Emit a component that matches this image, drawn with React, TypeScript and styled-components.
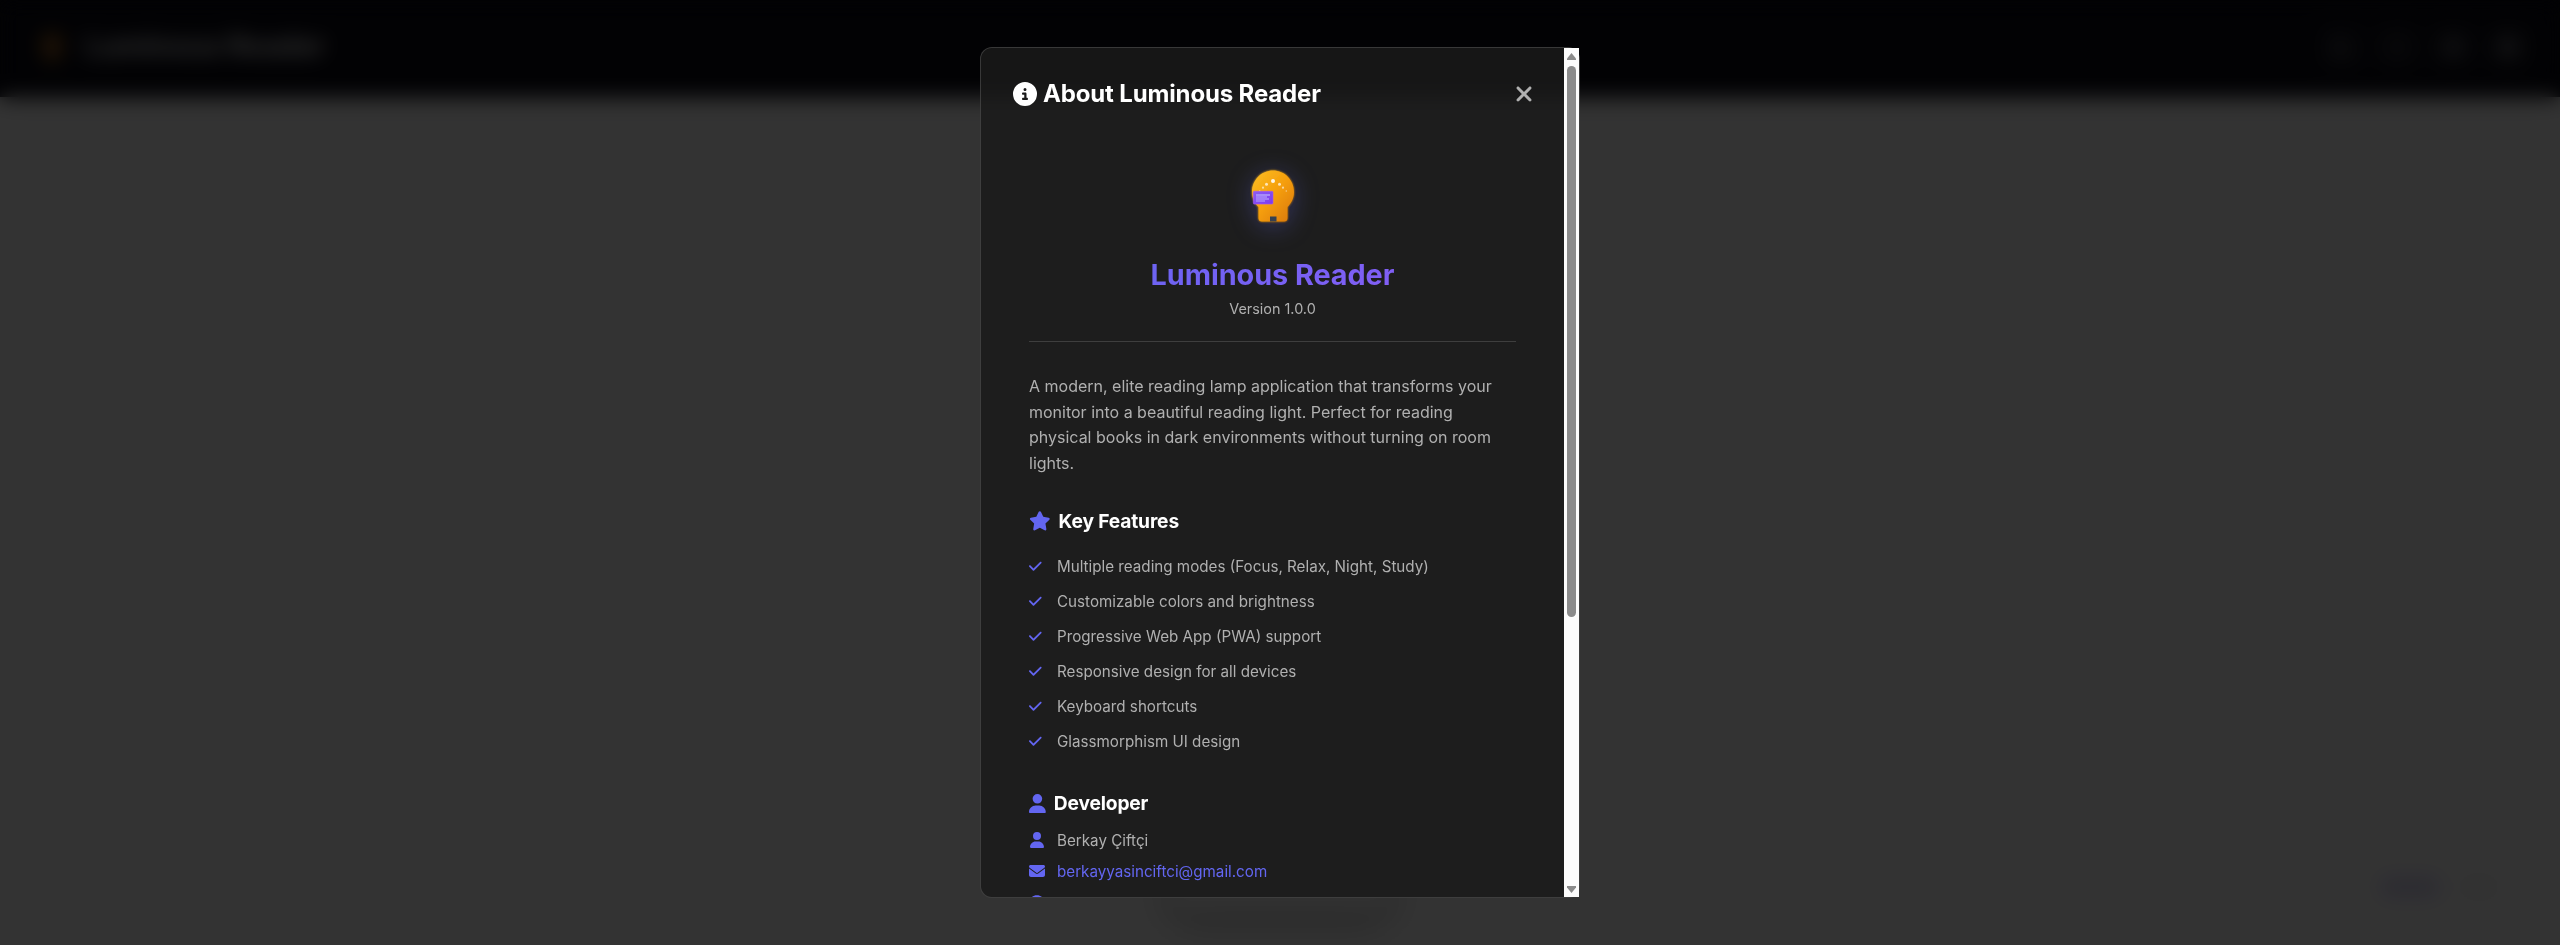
import React from "react";
import styled, { createGlobalStyle } from "styled-components";
import {
  FaCircleInfo,
  FaXmark,
  FaStar,
  FaCheck,
  FaUser,
  FaEnvelope,
  FaGithub,
  FaGear,
  FaExpand,
  FaMoon,
} from "react-icons/fa6";

const GlobalStyle = createGlobalStyle`
  * { box-sizing: border-box; margin: 0; padding: 0; }
  body {
    background: #fff;
    font-family: Inter, "Liberation Sans", sans-serif;
    line-height: 1.6;
    overflow: hidden;
  }
`;

const Page = styled.div`
  height: 100vh;
  display: flex;
  flex-direction: column;
  justify-content: space-between;
  background: #ffffff;
`;

const TopBar = styled.header`
  height: 97px;
  padding: 0 28px 4px 32px;
  display: flex;
  align-items: center;
  justify-content: space-between;
  background: #0a0a14;
  box-shadow: 0 4px 20px rgba(0, 0, 0, 0.15);
  color: #e0e0e0;
`;

const Brand = styled.div`
  display: flex;
  align-items: center;
  gap: 13px;
  font-size: 28.8px;
  font-weight: 700;
  letter-spacing: -0.3px;
  white-space: nowrap;
`;

const TopActions = styled.div`
  display: flex;
  gap: 8px;
`;

const TopButton = styled.div`
  width: 47.5px;
  height: 48px;
  border-radius: 12px;
  display: flex;
  align-items: center;
  justify-content: center;
  color: #8a8a90;
  background: rgba(255, 255, 255, 0.05);
  font-size: 18px;
`;

const BottomBar = styled.footer`
  display: grid;
  grid-template-columns: 1fr 224px 1fr;
  align-items: center;
  padding: 0 24px 33px;
`;

const Dock = styled.div`
  grid-column: 2;
  height: 50px;
  border-radius: 25px;
  background: #f6f6f6;
  box-shadow: 0 8px 32px rgba(0, 0, 0, 0.3);
`;

const Badges = styled.div`
  display: flex;
  justify-content: flex-end;
  gap: 20px;
  padding-right: 38px;
`;

const Badge = styled.div<{ $color: string; $width: number }>`
  width: ${(p) => p.$width}px;
  height: 22px;
  border-radius: 8px;
  background: ${(p) => p.$color};
`;

const Overlay = styled.div`
  position: fixed;
  inset: 0;
  display: flex;
  align-items: center;
  justify-content: center;
  background: rgba(0, 0, 0, 0.8);
  backdrop-filter: blur(10px);
`;

const Modal = styled.div`
  width: 600px;
  height: 90vh;
  display: flex;
  border: 1px solid rgba(255, 255, 255, 0.15);
  border-radius: 12px;
  background: rgba(26, 26, 26, 0.85);
`;

const ScrollArea = styled.div`
  flex: 1;
  min-width: 0;
  overflow: hidden;
  padding: 30px 32px 0;
  border-radius: 11px 0 0 11px;
`;

const Header = styled.div`
  display: flex;
  align-items: center;
  justify-content: space-between;
  height: 32px;
`;

const Title = styled.h2`
  display: flex;
  align-items: center;
  gap: 6px;
  font-size: 24px;
  font-weight: 700;
  line-height: 32px;
  letter-spacing: -0.15px;
  color: #fff;
  white-space: nowrap;
`;

const Close = styled.button`
  width: 40px;
  height: 40px;
  margin-right: -12px;
  display: flex;
  align-items: center;
  justify-content: center;
  border: 0;
  background: none;
  color: #b0b0b0;
  font-size: 24px;
`;

const Body = styled.div`
  padding: 46px 16px 0;
`;

const Hero = styled.div`
  display: flex;
  flex-direction: column;
  align-items: center;
  height: 186px;
  border-bottom: 1px solid rgba(255, 255, 255, 0.15);
`;

const Logo = styled.svg`
  width: 80px;
  height: 80px;
  overflow: visible;
  filter: drop-shadow(0 4px 12px rgba(99, 102, 241, 0.3));
`;

const AppName = styled.h3`
  width: 100%;
  margin-top: 16px;
  font-size: 28.8px;
  line-height: 46px;
  font-weight: 700;
  letter-spacing: -0.05px;
  text-align: center;
  background: linear-gradient(135deg, #6366f1, #8b5cf6);
  background-clip: text;
  -webkit-background-clip: text;
  color: transparent;
`;

const Version = styled.p`
  margin-top: -1px;
  font-size: 14.4px;
  line-height: 23px;
  color: #b0b0b0;
`;

const Description = styled.p`
  margin-top: 32px;
  font-size: 16px;
  line-height: 25.6px;
  color: #b0b0b0;
`;

const SectionTitle = styled.h4`
  display: flex;
  align-items: center;
  gap: 8px;
  font-size: 19.2px;
  line-height: 31px;
  font-weight: 700;
  letter-spacing: -0.15px;
  color: #fff;
`;

const TitleIcon = styled.span<{ $width: number }>`
  display: flex;
  width: ${(p) => p.$width}em;
  color: #6366f1;

  svg {
    width: 100%;
    height: ${(p) => Math.max(1, p.$width)}em;
  }
`;

const Section = styled.section<{ $gap: number }>`
  margin-top: ${(p) => p.$gap}px;
`;

const FeatureList = styled.ul`
  list-style: none;
  margin-top: 13px;
`;

const Feature = styled.li`
  display: flex;
  align-items: center;
  height: 35px;
  font-size: 15.2px;
  color: #b0b0b0;

  svg {
    width: 12.6px;
    height: 14.4px;
    margin: 0 15.4px 2px 0;
    color: #6366f1;
  }
`;

const Contacts = styled.div`
  margin-top: 7px;
`;

const Contact = styled.div<{ $link?: boolean }>`
  display: flex;
  align-items: center;
  height: 31px;
  gap: 12px;
  font-size: 15.2px;
  white-space: nowrap;
  color: ${(p) => (p.$link ? "#6366f1" : "#b0b0b0")};

  svg {
    width: 16px;
    height: 16px;
    margin-bottom: 2px;
    color: #6366f1;
  }

  &:last-child {
    height: 33px;
  }
`;

const ScrollTrack = styled.div`
  width: 15px;
  display: flex;
  flex-direction: column;
  align-items: center;
  background: #fcfcfc;
`;

const Arrow = styled.svg`
  width: 9px;
  height: 7px;
  margin: 5px 0 4px;
  flex: none;
`;

const Thumb = styled.div`
  width: 9px;
  height: 551px;
  border-radius: 5px;
  background: #8b8b8b;
  margin: 2px 0 auto;
`;

const features = [
  "Multiple reading modes (Focus, Relax, Night, Study)",
  "Customizable colors and brightness",
  "Progressive Web App (PWA) support",
  "Responsive design for all devices",
  "Keyboard shortcuts",
  "Glassmorphism UI design",
];

function LampLogo() {
  return (
    <Logo viewBox="0 0 80 80">
      <defs>
        <linearGradient id="bulb" x1="0" y1="0" x2="1" y2="1">
          <stop offset="0" stopColor="#fbbf24" />
          <stop offset="0.5" stopColor="#f59e0b" />
          <stop offset="1" stopColor="#d97706" />
        </linearGradient>
        <linearGradient id="book" x1="0" y1="0" x2="1" y2="1">
          <stop offset="0" stopColor="#8b5cf6" />
          <stop offset="1" stopColor="#7c3aed" />
        </linearGradient>
        <filter id="glow" x="-30%" y="-30%" width="160%" height="160%">
          <feGaussianBlur stdDeviation="1.2" result="b" />
          <feMerge>
            <feMergeNode in="b" />
            <feMergeNode in="SourceGraphic" />
          </feMerge>
        </filter>
      </defs>
      <path
        filter="url(#glow)"
        fill="url(#bulb)"
        d="M40 14.5C28.4 14.5 19 23.9 19 36C19 42 21.5 47 25.5 51V62Q25.5 65.5 29 65.5H51Q54.5 65.5 54.5 62V51C58.5 47 61 42 61 36C61 23.9 51.6 14.5 40 14.5Z"
      />
      <g fill="#fff">
        <circle cx="40" cy="25" r="2" opacity="0.9" />
        <circle cx="33.5" cy="28.2" r="1.5" opacity="0.7" />
        <circle cx="46.5" cy="28.2" r="1.5" opacity="0.7" />
        <circle cx="30" cy="31.7" r="1.1" opacity="0.6" />
        <circle cx="50" cy="31.7" r="1.1" opacity="0.6" />
        <circle cx="26.7" cy="35" r="0.8" opacity="0.5" />
        <circle cx="53.3" cy="35" r="0.8" opacity="0.5" />
      </g>
      <rect x="20.3" y="35.3" width="19.7" height="12.8" rx="1" fill="url(#book)" stroke="#a855f7" strokeWidth="0.6" />
      <g fill="#a78bfa">
        <rect x="23" y="38" width="14" height="2" />
        <rect x="23" y="40" width="11" height="2" opacity="0.8" />
        <rect x="23" y="42" width="13" height="2" opacity="0.8" />
        <rect x="23" y="44" width="9" height="2" opacity="0.7" />
      </g>
      <rect x="37" y="60.5" width="6.5" height="5" fill="#374151" />
    </Logo>
  );
}

export default function App() {
  return (
    <>
      <GlobalStyle />
      <Page>
        <TopBar>
          <Brand>
            <svg width="40" height="40" viewBox="0 0 40 40">
              <path d="M20 6a11 11 0 0 0-7 19v9h14v-9A11 11 0 0 0 20 6Z" fill="#b06c20" />
            </svg>
            Luminous Reader
          </Brand>
          <TopActions>
            <TopButton><FaMoon /></TopButton>
            <TopButton><FaExpand /></TopButton>
            <TopButton><FaGear /></TopButton>
            <TopButton><FaCircleInfo /></TopButton>
          </TopActions>
        </TopBar>
        <BottomBar>
          <Dock />
          <Badges>
            <Badge $color="#dcd8f8" $width={60} />
            <Badge $color="#f5f5f5" $width={38} />
          </Badges>
        </BottomBar>
      </Page>
      <Overlay>
        <Modal>
          <ScrollArea>
            <Header>
              <Title>
                <FaCircleInfo />
                About Luminous Reader
              </Title>
              <Close aria-label="Close"><FaXmark /></Close>
            </Header>
            <Body>
              <Hero>
                <LampLogo />
                <AppName>Luminous Reader</AppName>
                <Version>Version 1.0.0</Version>
              </Hero>
              <Description>
                A modern, elite reading lamp application that transforms your monitor into a
                beautiful reading light. Perfect for reading physical books in dark environments
                without turning on room lights.
              </Description>
              <Section $gap={29}>
                <SectionTitle>
                  <TitleIcon $width={1.125}><FaStar /></TitleIcon>
                  Key Features
                </SectionTitle>
                <FeatureList>
                  {features.map((f) => (
                    <Feature key={f}><FaCheck />{f}</Feature>
                  ))}
                </FeatureList>
              </Section>
              <Section $gap={28}>
                <SectionTitle>
                  <TitleIcon $width={0.875}><FaUser /></TitleIcon>
                  Developer
                </SectionTitle>
                <Contacts>
                  <Contact><FaUser />Berkay Çiftçi</Contact>
                  <Contact $link><FaEnvelope />berkayyasinciftci@gmail.com</Contact>
                  <Contact $link><FaGithub />github.com/berkay</Contact>
                </Contacts>
              </Section>
            </Body>
          </ScrollArea>
          <ScrollTrack>
            <Arrow viewBox="0 0 9 7"><path d="M4.5 0L9 5.5V7H0V5.5Z" fill="#8b8b8b" /></Arrow>
            <Thumb />
            <Arrow viewBox="0 0 9 7"><path d="M4.5 7L9 1.5V0H0V1.5Z" fill="#8b8b8b" /></Arrow>
          </ScrollTrack>
        </Modal>
      </Overlay>
    </>
  );
}
